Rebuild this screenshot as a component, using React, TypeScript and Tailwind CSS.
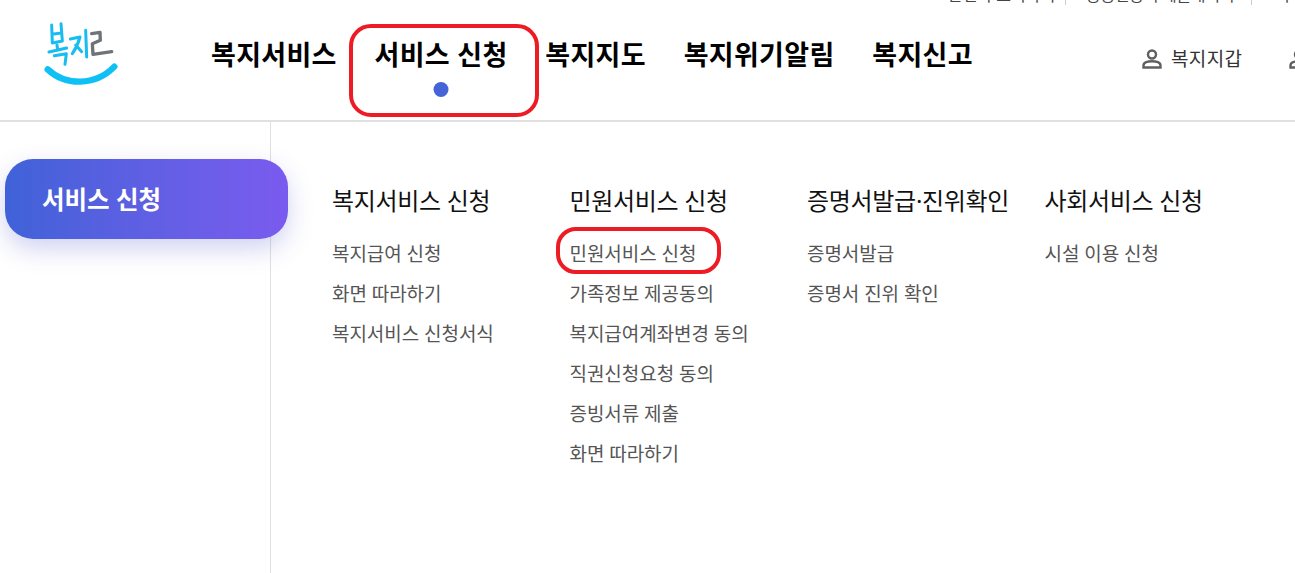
const font = "font-['Noto_Sans','Noto_Sans_CJK_KR',sans-serif]"

const navItems = ["복지서비스", "서비스 신청", "복지지도", "복지위기알림", "복지신고"]

const columns = [
    { title: "복지서비스 신청", links: ["복지급여 신청", "화면 따라하기", "복지서비스 신청서식"] },
    {
        title: "민원서비스 신청",
        links: ["민원서비스 신청", "가족정보 제공동의", "복지급여계좌변경 동의", "직권신청요청 동의", "증빙서류 제출", "화면 따라하기"],
    },
    { title: "증명서발급·진위확인", links: ["증명서발급", "증명서 진위 확인"] },
    { title: "사회서비스 신청", links: ["시설 이용 신청"] },
]

function Logo() {
    return (
        <svg width="90" height="75" viewBox="0 0 270 225" fill="none" strokeLinecap="round" strokeLinejoin="round">
            <g stroke="#17bdf0" strokeWidth="9">
                <path d="M50 30 L52 84 L82 78 L78 26 M51 58 L79 54" />
                <path d="M42 111 L95 99 M66 90 L68 104" />
                <path d="M58 122 L94 116 L90 148" />
                <path d="M106 72 L135 66 C130 85 122 102 112 116 M122 90 L140 110" />
                <path d="M152 46 L155 126" />
            </g>
            <path d="M170 56 L195 52 L196 76 L172 86 L174 118 L230 110" stroke="#6f7378" strokeWidth="10" />
            <path d="M38 163 C 90 212, 180 215, 238 155" stroke="#0fc0f5" strokeWidth="19" />
        </svg>
    )
}

function PersonIcon() {
    return (
        <svg width="22" height="22" viewBox="0 0 22 22" fill="none" stroke="#5f5f5f" strokeWidth="2.4" className="shrink-0">
            <circle cx="11" cy="6.5" r="4" />
            <path d="M2.5 19.5 V17.5 C2.5 14.5 7 13.2 11 13.2 C15 13.2 19.5 14.5 19.5 17.5 V19.5 Z" />
        </svg>
    )
}

export default function App() {
    return (
        <div className={`${font} relative h-[573px] w-[1295px] overflow-hidden bg-white`}>
            {/* top utility strip, scrolled almost out of view */}
            <div className="absolute left-[948px] top-[-15px] flex items-center text-[16px] leading-[20px] text-[#444]">
                <span className="w-[118px] whitespace-nowrap border-r border-[#ccc]">본인 부조회하기</span>
                <span className="w-[186px] whitespace-nowrap border-r border-[#ccc] pl-[20px] tracking-[-0.3px]">공공인증서 제출내역서</span>
                <span className="whitespace-nowrap pl-[23px]">기타</span>
            </div>

            <header className="flex h-[122px] items-start border-b-2 border-[#e0e0e0]">
                <div className="ml-[35px] mt-[15px] w-[90px] shrink-0">
                    <Logo />
                </div>
                <nav className="ml-[86px] mt-[37px] flex shrink-0 gap-[37.8px] text-[27px] font-bold leading-[36px] tracking-[0.3px] text-black">
                    {navItems.map((item, i) => (
                        <div key={item} className="relative whitespace-nowrap">
                            {item}
                            {i === 1 && (
                                <span className="absolute left-1/2 top-[45px] size-[15px] -translate-x-1/2 rounded-full bg-[#4464d8]" />
                            )}
                        </div>
                    ))}
                </nav>
                <div className="ml-[168px] mt-[46px] flex shrink-0 gap-[46px] text-[19px] leading-[26px] tracking-[0.4px] text-[#333]">
                    <div className="flex items-center gap-[8px] whitespace-nowrap">
                        <PersonIcon />
                        복지지갑
                    </div>
                    <div className="flex items-center gap-[8px] whitespace-nowrap">
                        <PersonIcon />
                        로그인
                    </div>
                </div>
            </header>

            <div className="flex h-[451px]">
                <aside className="w-[271px] shrink-0 border-r border-[#e0e0e0] pl-[5px] pt-[37px]">
                    <div className="relative flex h-[80px] w-[283px] items-center rounded-[28px] bg-gradient-to-r from-[#3f62d8] to-[#7a5bef] pl-[37px] pt-[3px] text-[24.5px] font-bold text-white shadow-[0_10px_24px_rgba(70,80,200,0.25)]">
                        서비스 신청
                    </div>
                </aside>
                <div className="flex pl-[61px] pt-[61px]">
                    {columns.map((col) => (
                        <div key={col.title} className="w-[237.5px] shrink-0">
                            <h3 className="whitespace-nowrap text-[24px] font-normal leading-[36px] tracking-[-0.3px] text-[#111]">
                                {col.title}
                            </h3>
                            <ul className="mt-[22px] flex flex-col">
                                {col.links.map((link) => (
                                    <li key={link} className="h-[40px] whitespace-nowrap text-[19px] leading-[26px] tracking-[-0.05px] text-[#555]">
                                        {link}
                                    </li>
                                ))}
                            </ul>
                        </div>
                    ))}
                </div>
            </div>

            {/* red annotation boxes */}
            <div className="absolute left-[349px] top-[24px] h-[93px] w-[190px] rounded-[22px] border-[4px] border-[#ed1c24]" />
            <div className="absolute left-[556px] top-[227px] h-[47px] w-[165px] rounded-[20px] border-[4px] border-[#ed1c24]" />
        </div>
    )
}
